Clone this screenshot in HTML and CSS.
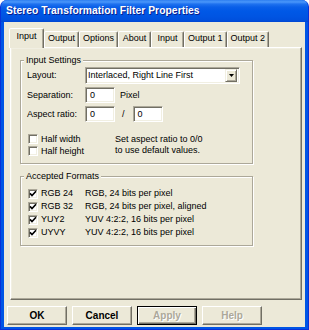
FILE: index.html
```html
<!DOCTYPE html>
<html>
<head>
<meta charset="utf-8">
<title>Stereo Transformation Filter Properties</title>
<link rel="stylesheet" href="styles.css">
</head>
<body>
<div class="window">
  <div class="titlebar"><span class="title">Stereo Transformation Filter Properties</span></div>
  <div class="frame">
    <div class="client">
      <div class="tabs">
        <div class="tab active">Input</div>
        <div class="tab">Output</div>
        <div class="tab">Options</div>
        <div class="tab">About</div>
        <div class="tab">Input</div>
        <div class="tab">Output 1</div>
        <div class="tab">Output 2</div>
      </div>
      <div class="panel">
        <div class="group settings">
          <div class="group-title">Input Settings</div>
          <div class="field-row row-layout">
            <span class="label">Layout:</span>
            <div class="select">
              <span class="select-text">Interlaced, Right Line First</span>
              <span class="select-btn"><svg width="5" height="3" viewBox="0 0 5 3"><path d="M0 0H5L2.5 3Z" fill="#000"/></svg></span>
            </div>
          </div>
          <div class="field-row">
            <span class="label">Separation:</span>
            <div class="edit">0</div>
            <span class="unit">Pixel</span>
          </div>
          <div class="field-row">
            <span class="label">Aspect ratio:</span>
            <div class="edit">0</div>
            <span class="slash">/</span>
            <div class="edit">0</div>
          </div>
          <div class="options">
            <div class="checks">
              <div class="check"><span class="box"></span><span>Half width</span></div>
              <div class="check"><span class="box"></span><span>Half height</span></div>
            </div>
            <div class="note">Set aspect ratio to 0/0<br>to use default values.</div>
          </div>
        </div>
        <div class="group formats">
          <div class="group-title">Accepted Formats</div>
          <div class="format">
            <span class="box"><svg width="8" height="8" viewBox="0 0 8 8"><path d="M1 3.4L3 5.6L7 1.2" fill="none" stroke="#000" stroke-width="1.6"/></svg></span>
            <span class="fmt">RGB 24</span><span class="desc">RGB, 24 bits per pixel</span>
          </div>
          <div class="format">
            <span class="box"><svg width="8" height="8" viewBox="0 0 8 8"><path d="M1 3.4L3 5.6L7 1.2" fill="none" stroke="#000" stroke-width="1.6"/></svg></span>
            <span class="fmt">RGB 32</span><span class="desc">RGB, 24 bits per pixel, aligned</span>
          </div>
          <div class="format">
            <span class="box"><svg width="8" height="8" viewBox="0 0 8 8"><path d="M1 3.4L3 5.6L7 1.2" fill="none" stroke="#000" stroke-width="1.6"/></svg></span>
            <span class="fmt">YUY2</span><span class="desc">YUV 4:2:2, 16 bits per pixel</span>
          </div>
          <div class="format">
            <span class="box"><svg width="8" height="8" viewBox="0 0 8 8"><path d="M1 3.4L3 5.6L7 1.2" fill="none" stroke="#000" stroke-width="1.6"/></svg></span>
            <span class="fmt">UYVY</span><span class="desc">YUV 4:2:2, 16 bits per pixel</span>
          </div>
        </div>
      </div>
      <div class="buttons">
        <div class="btn">OK</div>
        <div class="btn">Cancel</div>
        <div class="btn default disabled">Apply</div>
        <div class="btn disabled">Help</div>
      </div>
    </div>
  </div>
</div>
</body>
</html>
```

FILE: styles.css
```css
* { box-sizing: border-box; margin: 0; padding: 0; }
html, body { width: 309px; height: 330px; overflow: hidden; background: #fff; }
body { font-family: "Liberation Sans", Arial, sans-serif; font-size: 9px; line-height: 11px; color: #000; }

.window {
  width: 309px; height: 330px;
  display: flex; flex-direction: column;
  border: 1px solid #0831D9; border-top: none;
  border-radius: 7px 7px 0 0;
  overflow: hidden;
  background: #0055E5;
}
.titlebar {
  height: 22px; flex: none;
  display: flex; align-items: center;
  padding: 0 0 1px 5px;
  background: linear-gradient(180deg, #2E7EF0 0, #4A97FA 2px, #1F72EF 4px, #0A5FE8 7px, #0058E6 11px, #0055E3 16px, #0050DD 20px, #0046D2 22px);
}
.title {
  color: #fff; font-weight: bold; font-size: 10.3px; line-height: 12px;
  letter-spacing: 0.05px;
  text-shadow: 1px 1px 0 #0A1E8C;
  white-space: nowrap;
}
.frame {
  flex: 1; display: flex;
  padding: 0 3px 2px;
  background: #0055E5;
}
.client {
  flex: 1; display: flex; flex-direction: column;
  background: #ECE9D8;
  padding: 6px 3px 0 6px;
}

/* tabs */
.tabs { display: flex; align-items: flex-end; height: 19px; margin-left: -1px; }
.tab {
  height: 16px; min-width: 33px;
  padding: 1px 3px 0;
  text-align: center; white-space: nowrap;
  border: 1px solid; border-bottom: none;
  border-color: #fff #716F64 transparent #fff;
  border-radius: 2px 2px 0 0;
  box-shadow: inset -1px 0 0 #ACA899;
  background: #ECE9D8;
}
.tab.active {
  height: 20px; min-width: 35px;
  margin-bottom: -1px; padding-top: 2px;
  position: relative; z-index: 1;
}

/* panel */
.panel {
  height: 253px; flex: none;
  display: flex; flex-direction: column;
  border: 1px solid; border-color: #fff #716F64 #716F64 #fff;
  box-shadow: inset -1px -1px 0 #ACA899, inset 1px 1px 0 #F1EFE2;
  padding: 12px 0 0 9px;
}

.group {
  width: 233px;
  display: flex; flex-direction: column;
  border: 1px solid #ACA899;
  box-shadow: inset 1px 1px 0 #fff, 1px 1px 0 #fff;
  padding-left: 6px;
}
.group-title {
  align-self: flex-start;
  margin: -6px 0 0 -3px; padding: 0 2px;
  height: 11px;
  background: #ECE9D8;
}
.settings { height: 104px; }
.formats { height: 70px; margin-top: 12px; }

.field-row { display: flex; align-items: center; height: 16px; margin-top: 3px; }
.row-layout { height: 17px; margin-top: 1px; }
.label { width: 58px; flex: none; }

.select {
  width: 155px; height: 17px;
  display: flex; align-items: center;
  background: #fff;
  border: 1px solid; border-color: #ACA899 #fff #fff #ACA899;
  box-shadow: inset 1px 1px 0 #716F64, inset -1px -1px 0 #F1EFE2;
  padding: 1px 2px 1px 2px;
}
.select-text { flex: 1; white-space: nowrap; }
.select-btn {
  width: 12px; height: 13px;
  display: flex; align-items: center; justify-content: center;
  background: #ECE9D8;
  border: 1px solid; border-color: #F1EFE2 #716F64 #716F64 #F1EFE2;
  box-shadow: inset 1px 1px 0 #fff, inset -1px -1px 0 #ACA899;
}

.edit {
  width: 30px; height: 16px;
  display: flex; align-items: center;
  background: #fff;
  border: 1px solid; border-color: #ACA899 #fff #fff #ACA899;
  box-shadow: inset 1px 1px 0 #716F64, inset -1px -1px 0 #F1EFE2;
  padding-left: 4px;
}
.unit { margin-left: 5px; }
.slash { margin: 0 8px 0 7px; }

.options { display: flex; margin-top: 11px; }
.checks { width: 88px; display: flex; flex-direction: column; }
.check { display: flex; align-items: center; height: 12px; }
.note { margin-top: 1px; }

.box {
  width: 10px; height: 10px; flex: none;
  margin: 0 3px 0 1px;
  display: flex; align-items: center; justify-content: center;
  background: #fff;
  border: 1px solid; border-color: #ACA899 #fff #fff #ACA899;
  box-shadow: inset 1px 1px 0 #716F64, inset -1px -1px 0 #F1EFE2;
}
.box svg { display: block; }

.format { display: flex; align-items: center; height: 13px; }
.formats .group-title + .format { margin-top: 5px; }
.fmt { width: 44px; flex: none; }

/* buttons */
.buttons { display: flex; gap: 5px; margin: 6px 0 0 -3px; }
.btn {
  width: 60px; height: 19px;
  display: flex; align-items: center; justify-content: center;
  font-weight: bold; font-size: 10px;
  border: 1px solid; border-color: #fff #716F64 #716F64 #fff;
  box-shadow: inset -1px -1px 0 #ACA899;
}
.btn.disabled { color: #ACA899; text-shadow: 1px 1px 0 #fff; }
.btn.default {
  border-color: #000;
  box-shadow: inset 1px 1px 0 #fff, inset -1px -1px 0 #716F64, inset -2px -2px 0 #ACA899;
}
```
